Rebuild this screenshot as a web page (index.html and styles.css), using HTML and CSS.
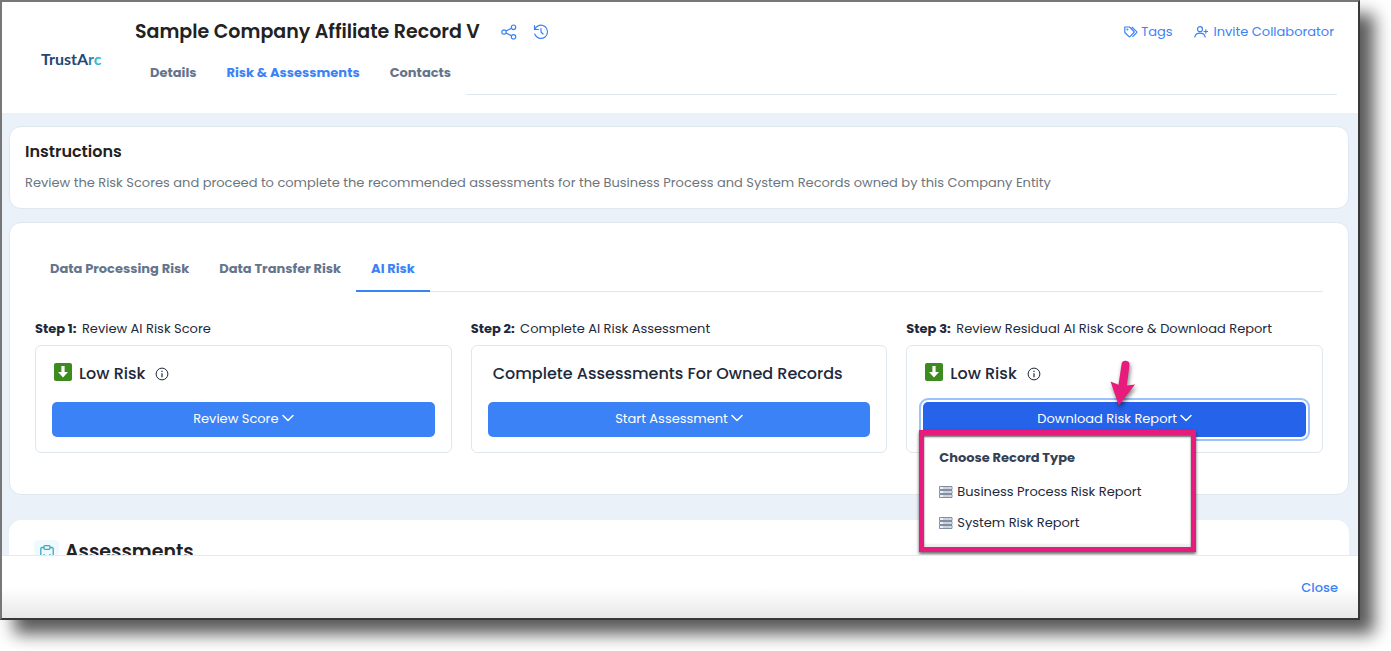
FILE: index.html
```html
<!DOCTYPE html>
<html lang="en">
<head>
<meta charset="utf-8">
<title>Sample Company Affiliate Record V</title>
<link rel="stylesheet" href="styles.css">
</head>
<body>
<svg class="defs" aria-hidden="true">
  <symbol id="chevron" viewBox="0 0 12 8"><path d="M1 1.500l5 5 5-5" fill="none" stroke="currentColor" stroke-width="1.500" stroke-linecap="round" stroke-linejoin="round"/></symbol>
  <symbol id="low" viewBox="0 0 18 18"><rect width="18" height="18" rx="2" fill="#3d8b1f"/><path d="M7.400 3h3.200v6h3.400L9 14.500 4 9h3.400z" fill="#fff"/></symbol>
  <symbol id="info" viewBox="0 0 14 14"><circle cx="7" cy="7" r="5.900" fill="none" stroke="currentColor"/><path d="M7 6.300v4M7 3.800v1.200" stroke="currentColor" stroke-width="1.200"/></symbol>
  <symbol id="server" viewBox="0 0 14 12"><path d="M.5.5h12.500v3H.5zM.5 4.500h12.500v3H.5zM.5 8.500h12.500v3H.5z" fill="#eef1f6" stroke="currentColor" stroke-width=".8"/><path d="M4 2h7.500M4 6h7.500M4 10h7.500" stroke="currentColor" stroke-width=".5"/></symbol>
</svg>
<div class="window">
  <header class="header">
    <div class="logo">TrustA<span class="logo-r">r</span><span class="logo-c">c</span></div>
    <div class="header-body">
      <div class="title-row">
        <h1 class="title">Sample Company Affiliate Record V</h1>
        <button class="icon-button" type="button" aria-label="Share">
          <svg width="16" height="16" viewBox="0 0 16 16" fill="none" stroke="currentColor" stroke-width="1.200"><circle cx="3" cy="8" r="2.200"/><circle cx="12.500" cy="3.200" r="2.200"/><circle cx="12.500" cy="12.800" r="2.200"/><path d="M5 7l5.500-2.800M5 9l5.500 2.800"/></svg>
        </button>
        <button class="icon-button" type="button" aria-label="History">
          <svg width="16" height="16" viewBox="0 0 16 16" fill="none" stroke="currentColor" stroke-width="1.200" stroke-linecap="round" stroke-linejoin="round"><path d="M1.500 1.500v4h4M1.800 5.300A6.600 6.600 0 1 1 1.700 10M8 4.500V8l2 2"/></svg>
        </button>
        <div class="actions">
          <a class="action" href="#tags">
            <svg width="14" height="12" viewBox="0 0 14 12" fill="none" stroke="currentColor" stroke-width="1.200" stroke-linejoin="round"><path d="M.8 1h4.700l4.500 4.500a.7.7 0 0 1 0 1L6 10.700a.7.7 0 0 1-1 0L.8 6.500zM7.800 1l4.900 4.600a.7.7 0 0 1 0 1L8.500 10.800"/><circle cx="3.400" cy="3.600" r=".4"/></svg>
            Tags</a>
          <a class="action action-invite" href="#invite">
            <svg width="14" height="12" viewBox="0 0 14 12" fill="none" stroke="currentColor" stroke-width="1.200" stroke-linecap="round"><circle cx="6" cy="3.200" r="2.500"/><path d="M.8 11c.6-2.600 2.600-3.800 5.200-3.800s4.600 1.200 5.200 3.800M10 5.500h3.500M11.800 3.800v3.400"/></svg>
            Invite Collaborator</a>
        </div>
      </div>
      <nav class="tabs" aria-label="Record">
        <a class="tab" href="#details">Details</a>
        <a class="tab active" href="#risk">Risk &amp; Assessments</a>
        <a class="tab" href="#contacts">Contacts</a>
        <span class="tabs-rest"></span>
      </nav>
    </div>
  </header>

  <main class="main">
    <section class="card instructions">
      <h2 class="card-title">Instructions</h2>
      <p class="card-text">Review the Risk Scores and proceed to complete the recommended assessments for the Business Process and System Records owned by this Company Entity</p>
    </section>

    <section class="card risk">
      <nav class="tabs tabs-lined" aria-label="Risk type">
        <a class="tab" href="#processing">Data Processing Risk</a>
        <a class="tab" href="#transfer">Data Transfer Risk</a>
        <a class="tab active" href="#ai">AI Risk</a>
        <span class="tabs-rest"></span>
      </nav>
      <div class="steps">
        <div class="step">
          <p class="step-label"><b>Step 1:</b> Review AI Risk Score</p>
          <div class="step-box">
            <h3 class="step-title"><svg class="low-icon"><use href="#low"/></svg>Low Risk<svg class="info-icon"><use href="#info"/></svg></h3>
            <button class="button" type="button">Review Score <svg class="chevron"><use href="#chevron"/></svg></button>
          </div>
        </div>
        <div class="step">
          <p class="step-label"><b>Step 2:</b> Complete AI Risk Assessment</p>
          <div class="step-box">
            <h3 class="step-title step-title-inset">Complete Assessments For Owned Records</h3>
            <button class="button" type="button">Start Assessment <svg class="chevron"><use href="#chevron"/></svg></button>
          </div>
        </div>
        <div class="step">
          <p class="step-label"><b>Step 3:</b> Review Residual AI Risk Score &amp; Download Report</p>
          <div class="step-box">
            <h3 class="step-title"><svg class="low-icon"><use href="#low"/></svg>Low Risk<svg class="info-icon"><use href="#info"/></svg></h3>
            <div class="dropdown">
              <button class="button open" type="button" aria-expanded="true">Download Risk Report <svg class="chevron"><use href="#chevron"/></svg></button>
              <svg class="pointer" viewBox="0 0 30 50" aria-hidden="true"><path d="M12.500 4.500a4 4 0 0 1 8 .6L17.800 25.500l8.200-.9L9.800 45.500 1.500 21.500l8 3.300z" fill="#e61b7b"/></svg>
              <div class="menu">
                <h4 class="menu-title">Choose Record Type</h4>
                <button class="menu-item" type="button"><svg class="server-icon"><use href="#server"/></svg>Business Process Risk Report</button>
                <button class="menu-item" type="button"><svg class="server-icon"><use href="#server"/></svg>System Risk Report</button>
              </div>
            </div>
          </div>
        </div>
      </div>
    </section>

    <section class="card assessments">
      <span class="badge"><svg width="14" height="18" viewBox="0 0 14 18" fill="none" stroke="#3ba9c4" stroke-width="1.300"><path d="M4 2.500H2A1.200 1.200 0 0 0 .8 3.700v12.100A1.200 1.200 0 0 0 2 17h10a1.200 1.200 0 0 0 1.200-1.200V3.700A1.200 1.200 0 0 0 12 2.500h-2"/><rect x="4" y=".7" width="6" height="3.600" rx="1"/><path d="M4 9v4M7 11v2M10 9v4"/></svg></span>
      <h2 class="assess-title">Assessments</h2>
    </section>
  </main>

  <footer class="footer"><button class="close" type="button">Close</button></footer>
</div>
</body>
</html>
```
FILE: styles.css
```css
* { box-sizing: border-box; }
body {
  margin: 0;
  height: 100vh;
  padding: 0 31px 31px 0;
  overflow: hidden;
  background: #fff;
  color: #1e293b;
  font: 13px/20px Poppins, Inter, sans-serif;
}
h1, h2, h3, h4, p { margin: 0; }
a { text-decoration: none; }
button { font: inherit; border: 0; background: none; padding: 0; cursor: pointer; }
svg { flex: none; }
.defs { position: absolute; width: 0; height: 0; }

.window {
  display: flex;
  flex-direction: column;
  height: 100%;
  background: #fff;
  border: 2px solid;
  border-color: #777 #383838 #383838 #777;
  box-shadow: 14px 14px 16px rgba(0, 0, 0, .65);
}

.header { display: flex; padding: 12px 21px 18px 0; }
.logo {
  width: 133px;
  padding: 35px 0 0 39px;
  color: #1f4778;
  font: 700 16px/20px Lato, sans-serif;
}
.logo-r { color: #2f86a8; }
.logo-c { color: #37b9d3; }
.header-body { flex: 1; }
.title-row { display: flex; align-items: center; height: 36px; }
.title { color: #222; font-size: 19px; font-weight: 600; line-height: 30px; margin-right: 5px; }
.icon-button { display: flex; margin-left: 16px; color: #3b82f6; }
.actions { display: flex; gap: 21px; margin-left: auto; padding-right: 3px; }
.action { display: flex; align-items: center; gap: 3px; color: #3b82f6; }
.action-invite { gap: 6px; }

.tabs { display: flex; height: 45px; }
.tab {
  display: flex;
  align-items: center;
  padding: 0 15px;
  color: #64748b;
  font-weight: 700;
}
.tab.active { color: #3b82f6; }
.tabs-rest { flex: 1; border-bottom: 1px solid #dfe7ef; }
.tabs-lined { height: 47px; }
.tabs-lined .active { border-bottom: 2px solid #3b82f6; padding-top: 2px; }

.main {
  flex: 1;
  min-height: 0;
  overflow: hidden;
  padding: 13px 9px 0 7px;
  background: #eaf1f9;
}
.card { background: #fff; border: 1px solid #dfe7ef; border-radius: 12px; }
.instructions { padding: 13px 15px 15px; margin-bottom: 13px; }
.card-title { color: #222; font-size: 16px; font-weight: 600; line-height: 24px; margin-bottom: 9px; }
.card-text { color: #6c757d; }
.risk { padding: 22px 25px 41px; margin-bottom: 25px; }
.steps { display: grid; grid-template-columns: repeat(3, 1fr); gap: 19px; margin-top: 27px; }
.step-label { margin-bottom: 6px; }
.step-label b { margin-right: 2px; }
.step-box { border: 1px solid #dfe7ef; border-radius: 6px; padding: 16px 16px 15px; }
.step-title {
  display: flex;
  align-items: center;
  height: 24px;
  padding-left: 2px;
  margin-bottom: 16px;
  font-size: 16px;
  font-weight: 500;
}
.step-title-inset { padding-left: 5px; }
.low-icon { width: 18px; height: 18px; margin: 0 7px 4px 0; }
.info-icon { width: 14px; height: 14px; margin-left: 10px; }
.button {
  display: flex;
  align-items: center;
  justify-content: center;
  gap: 3px;
  width: 100%;
  height: 35px;
  padding-bottom: 2px;
  border-radius: 5px;
  background: #3b82f6;
  color: #fff;
}
.button.open { background: #2563eb; box-shadow: 0 0 0 2px #fff, 0 0 0 4px #9dc1fb; }
.chevron { width: 12px; height: 8px; margin-bottom: 2px; }

.dropdown { position: relative; }
.pointer {
  position: absolute;
  left: 186px;
  top: -42px;
  width: 30px;
  height: 50px;
  filter: drop-shadow(1px 3px 2px rgba(0, 0, 0, .5));
}
.menu {
  position: absolute;
  left: -4px;
  top: 28px;
  width: 277px;
  padding: 13px 15px 9px;
  border: 5px solid #e61b7b;
  background: #fff;
  box-shadow: 0 2px 3px rgba(0, 0, 0, .6), inset 0 2px 2px rgba(0, 0, 0, .6), inset 0 -3px 2px #eee;
}
.menu-title { color: #334155; font-size: 13px; line-height: 20px; margin-bottom: 8px; }
.menu-item { display: flex; align-items: center; gap: 4px; width: 100%; height: 31px; color: #1e293b; }
.server-icon { width: 14px; height: 12px; color: #64748b; }

.assessments { display: flex; gap: 6px; padding: 19px 24px; border-color: #fff; }
.badge {
  display: flex;
  align-items: center;
  justify-content: center;
  width: 25px;
  height: 27px;
  border-radius: 4px;
  background: #f0f9fe;
}
.assess-title { color: #222; font-size: 19px; font-weight: 600; line-height: 24px; }

.footer {
  display: flex;
  align-items: center;
  justify-content: flex-end;
  height: 63px;
  padding: 2px 20px 0;
  border-top: 1px solid #e9e9e9;
  background: linear-gradient(#fff 50%, #e8e8e8);
}
.close { color: #3b82f6; font-weight: 500; }
```
